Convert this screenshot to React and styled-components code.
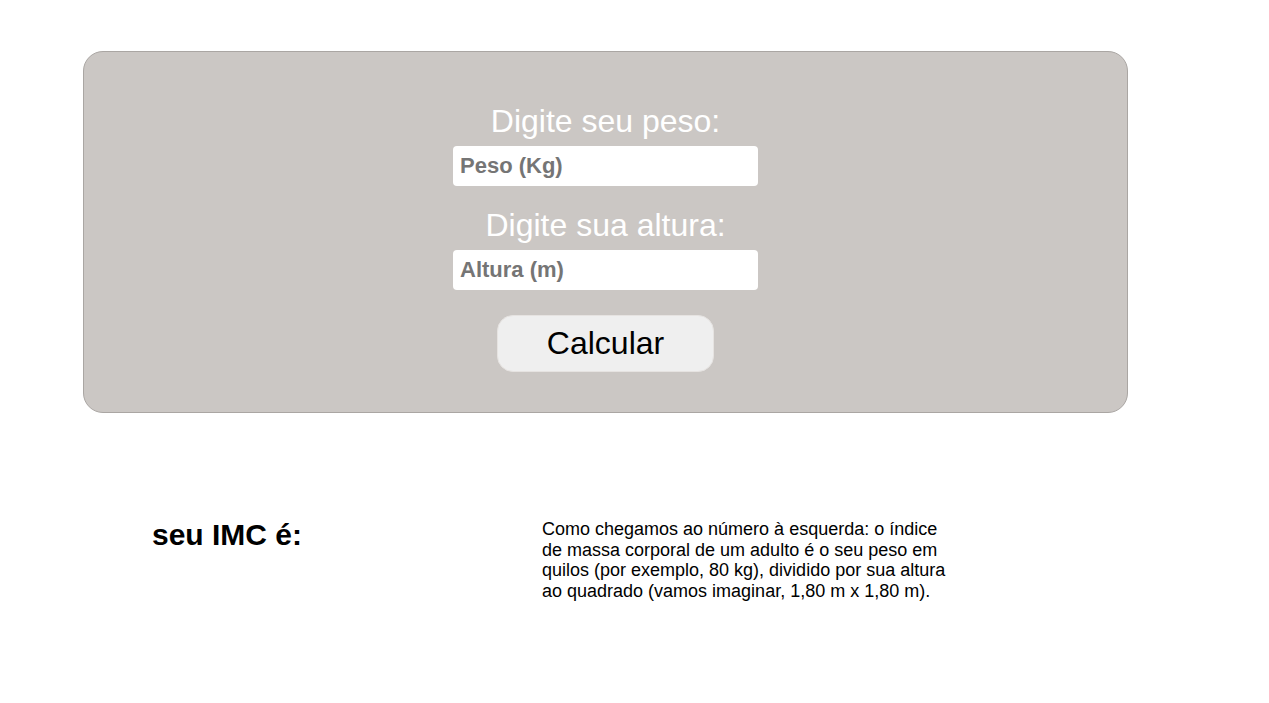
import styled, { createGlobalStyle } from 'styled-components';

const GlobalStyle = createGlobalStyle`
  body {
    margin: 0;
    background: #fff;
    font-family: 'Liberation Sans', Arial, sans-serif;
  }
`;

const Page = styled.div`
  padding: 51px 0 0 83px;
`;

const Card = styled.form`
  box-sizing: border-box;
  width: 1045px;
  height: 362px;
  padding-top: 52px;
  display: flex;
  flex-direction: column;
  align-items: center;
  background: #cbc7c4;
  border: 1px solid #aaa6a3;
  border-radius: 20px;
`;

const Label = styled.label`
  color: #fff;
  font-size: 32px;
  line-height: 34px;
  margin-bottom: 8px;
`;

const Input = styled.input`
  box-sizing: border-box;
  width: 305px;
  height: 40px;
  margin-bottom: ${(p) => p.$gap || 0}px;
  padding: 0 7px;
  border: none;
  border-radius: 4px;
  background: #fff;
  font-family: inherit;
  font-weight: 700;
  font-size: 22px;
  outline: none;

  &::placeholder {
    color: #757575;
  }
`;

const Button = styled.button`
  width: 217px;
  height: 57px;
  margin-top: 25px;
  border: 1px solid #e6e3e1;
  border-radius: 16px;
  background: #efefef;
  color: #000;
  font-family: inherit;
  font-size: 32px;
  cursor: pointer;
`;

const Result = styled.section`
  display: flex;
  align-items: flex-start;
  padding: 105px 0 0 152px;
`;

const Title = styled.h2`
  margin: 0;
  width: 390px;
  font-size: 30px;
  font-weight: 700;
  line-height: 34px;
`;

const Explain = styled.p`
  margin: 1px 0 0;
  width: 410px;
  font-size: 18px;
  line-height: 20.7px;
  color: #000;
`;

export default function App() {
  return (
    <>
      <GlobalStyle />
      <Page>
        <Card onSubmit={(e) => e.preventDefault()}>
          <Label htmlFor="peso">Digite seu peso:</Label>
          <Input id="peso" placeholder="Peso (Kg)" $gap={22} />
          <Label htmlFor="altura">Digite sua altura:</Label>
          <Input id="altura" placeholder="Altura (m)" />
          <Button type="submit">Calcular</Button>
        </Card>
      </Page>
      <Result>
        <Title>seu IMC é:</Title>
        <Explain>
          Como chegamos ao número à esquerda: o índice de massa corporal de um
          adulto é o seu peso em quilos (por exemplo, 80 kg), dividido por sua
          altura ao quadrado (vamos imaginar, 1,80 m x 1,80 m).
        </Explain>
      </Result>
    </>
  );
}
